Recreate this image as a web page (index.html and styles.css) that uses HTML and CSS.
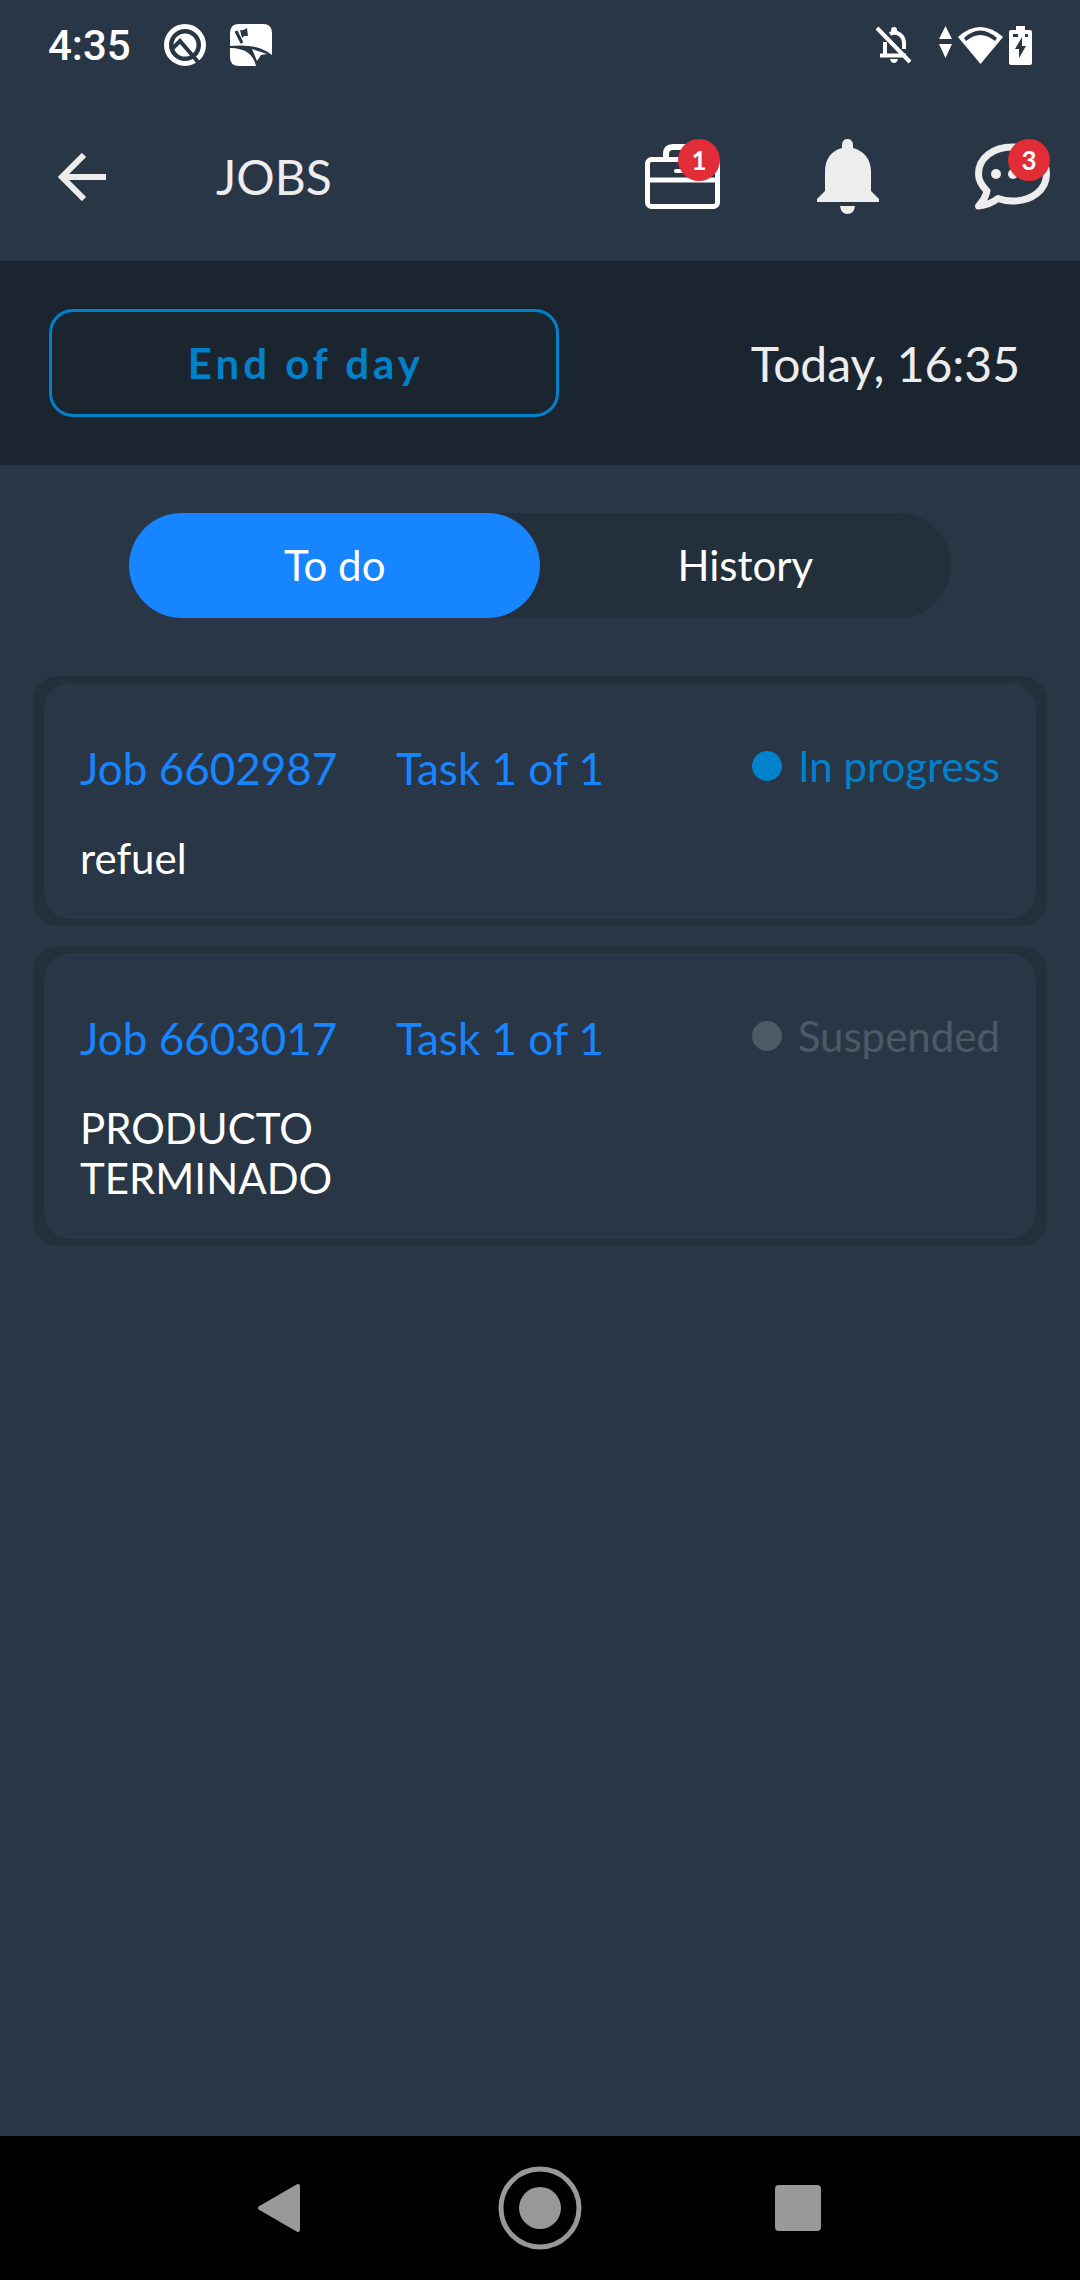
FILE: index.html
```html
<!DOCTYPE html>
<html lang="en">
<head>
    <meta charset="UTF-8">
    <meta name="viewport" content="width=device-width, initial-scale=1.0">
    <title>Jobs</title>
    <link rel="stylesheet" href="styles.css">
</head>
<body>

<div class="status-bar">
    <span class="clock">4:35</span>
    <svg width="42" height="42" viewBox="0 0 42 42">
        <circle cx="21" cy="21" r="18.5" fill="none" stroke="#fff" stroke-width="5"/>
        <circle cx="21" cy="21" r="11.5" fill="#fff"/>
        <path d="M8 25 L16 17 L34 38" fill="none" stroke="#293645" stroke-width="4"/>
    </svg>
    <svg width="42" height="42" viewBox="0 0 42 42">
        <path d="M9 0 H33 Q42 0 42 9 V31 Q28 19 0 22 V9 Q0 0 9 0 Z" fill="#fff"/>
        <path d="M0 24 Q22 24 26 42 H9 Q0 42 0 33 Z" fill="#fff"/>
        <path d="M22 25 L37 30 L31 31 L27 37 Z" fill="#fff"/>
        <path d="M6 7 L12 19" stroke="#293645" stroke-width="3"/>
        <path d="M10 6 Q13 7 17 4 L18 12 Q14 11 12 14 Z" fill="#293645"/>
    </svg>
    <div class="status-icons">
        <svg class="muted" width="37" height="38" viewBox="0 0 37 38">
            <path d="M5 29.5 H31 M10 29 V16 M15 8 C22 4 29 10 29 17 V23 M2 2 L35 36" fill="none" stroke="#fff" stroke-width="4"/>
            <circle cx="19" cy="4" r="3" fill="#fff"/>
            <path d="M15 33 H23 Q22 37 19 37 Q16 37 15 33 Z" fill="#fff"/>
        </svg>
        <svg width="13" height="38" viewBox="0 0 13 38">
            <path d="M0 13 L6.5 0 L13 13 Z M0 18 H13 L6.5 32 Z" fill="#fff"/>
        </svg>
        <svg width="45" height="38" viewBox="0 0 45 38">
            <path d="M0 11 Q22 -9 45 11 L22.5 38 Z" fill="#fff"/>
            <path d="M6 12 Q22 -3 39 12 L37 15 Q22 3 8 15 Z" fill="#293645"/>
        </svg>
        <svg width="23" height="39" viewBox="0 0 23 39">
            <path d="M7 0 H16 V4 H21 Q23 4 23 6 V37 Q23 39 21 39 H2 Q0 39 0 37 V6 Q0 4 2 4 H7 Z" fill="#fff"/>
            <path d="M13 11 L6 23 H10 V32 L17 20 H13 Z M4 8 H9 V11 H4 Z M16 8 H19 V11 H16 Z" fill="#293645"/>
        </svg>
    </div>
</div>

<header class="app-bar">
    <button class="icon-button" aria-label="Back">
        <svg width="48" height="48" viewBox="0 0 48 48">
            <path d="M26 2 L4 24 L26 46 M4 24 H48" fill="none" stroke="#ededed" stroke-width="6"/>
        </svg>
    </button>
    <h1>JOBS</h1>
    <nav class="actions">
        <button class="icon-button" aria-label="Jobs">
            <svg width="75" height="75" viewBox="0 0 75 75">
                <g fill="none" stroke="#fff" stroke-width="5">
                    <rect x="2.5" y="20.5" width="70" height="47" rx="4"/>
                    <path d="M2 41 H73"/>
                    <path d="M21 20 V15 Q21 8 28 8 H47 Q54 8 54 15 V20" stroke-width="6"/>
                    <path d="M31 32 H44" stroke-linecap="round" stroke-width="4"/>
                </g>
            </svg>
            <span class="badge">1</span>
        </button>
        <button class="icon-button" aria-label="Notifications">
            <svg width="75" height="75" viewBox="0 0 75 75">
                <path d="M32 9 V5 Q33 0 37.5 0 Q42 0 43 5 V9 C54 12 61 20 61 33 V52 L69 60 V63 H7 V60 L15 52 V33 C15 20 21 12 32 9 Z" fill="#ededed"/>
                <path d="M30 67 H45 Q44 75 37.5 75 Q31 75 30 67 Z" fill="#ededed"/>
            </svg>
        </button>
        <button class="icon-button" aria-label="Messages">
            <svg width="75" height="75" viewBox="0 0 75 75">
                <path d="M12 52 C6 46 3.5 40 3.5 35 C3.5 19 18 8 37.5 8 C57 8 71.5 19 71.5 35 C71.5 51 57 62 37.5 62 C32 62 27 61 23 59.5 C17 64 10 66.5 3.5 67 C8 62 11 57 12 52 Z" fill="none" stroke="#ededed" stroke-width="7" stroke-linejoin="round"/>
                <circle cx="21" cy="35" r="5" fill="#ededed"/>
                <circle cx="38" cy="35" r="5" fill="#ededed"/>
                <circle cx="54" cy="35" r="5" fill="#ededed"/>
            </svg>
            <span class="badge">3</span>
        </button>
    </nav>
</header>

<section class="day-bar">
    <button class="end-day">End of day</button>
    <span class="today">Today, 16:35</span>
</section>

<main>
    <div class="tabs" role="tablist">
        <button class="tab selected" role="tab" aria-selected="true">To do</button>
        <button class="tab" role="tab" aria-selected="false">History</button>
    </div>

    <article class="job-card">
        <div class="job-body">
            <h2 class="job-id">Job 6602987</h2>
            <span class="job-task">Task 1 of 1</span>
            <span class="job-status in-progress">In progress</span>
            <p class="job-name">refuel</p>
        </div>
    </article>
    <article class="job-card">
        <div class="job-body">
            <h2 class="job-id">Job 6603017</h2>
            <span class="job-task">Task 1 of 1</span>
            <span class="job-status suspended">Suspended</span>
            <p class="job-name">PRODUCTO TERMINADO</p>
        </div>
    </article>
</main>

<footer class="nav-bar">
    <button class="icon-button" aria-label="Back">
        <svg width="84" height="84" viewBox="0 0 84 84">
            <path d="M20 42 L58 20 V64 Z" fill="#999" stroke="#999" stroke-width="4" stroke-linejoin="round"/>
        </svg>
    </button>
    <button class="icon-button" aria-label="Home">
        <svg width="84" height="84" viewBox="0 0 84 84">
            <circle cx="42" cy="42" r="39" fill="none" stroke="#999" stroke-width="5"/>
            <circle cx="42" cy="42" r="21" fill="#999"/>
        </svg>
    </button>
    <button class="icon-button" aria-label="Recent apps">
        <svg width="84" height="84" viewBox="0 0 84 84">
            <rect x="19" y="19" width="46" height="46" rx="4" fill="#999"/>
        </svg>
    </button>
</footer>

</body>
</html>
```
FILE: styles.css
```css
* {
    box-sizing: border-box;
}
body {
    font-family: Lato, sans-serif;
    display: flex;
    flex-direction: column;
    min-height: 100vh;
    margin: 0;
    background-color: #293645;
    color: #fff;
}
button {
    font-family: inherit;
    color: inherit;
    background: none;
    border: none;
    padding: 0;
    cursor: pointer;
}
svg {
    display: block;
}
.status-bar {
    display: flex;
    align-items: center;
    gap: 24px;
    height: 90px;
    padding: 0 48px;
}
.clock {
    font-family: Roboto, sans-serif;
    font-size: 42px;
    font-weight: 500;
    margin-right: 9px;
}
.status-icons {
    display: flex;
    align-items: center;
    gap: 6px;
    margin-left: auto;
}
.muted {
    margin-right: 21px;
}
.app-bar {
    display: flex;
    align-items: center;
    height: 171px;
    padding: 2px 30px 0 58px;
}
.icon-button {
    position: relative;
}
h1 {
    margin: 0 0 0 110px;
    font-size: 48px;
    font-weight: 400;
    color: #ededed;
}
.actions {
    display: flex;
    gap: 90px;
    margin-left: auto;
}
.badge {
    position: absolute;
    top: 0;
    right: 0;
    width: 42px;
    height: 42px;
    border-radius: 50%;
    background-color: #e12d36;
    color: #fff;
    font-size: 26px;
    font-weight: 700;
    line-height: 42px;
}
.day-bar {
    display: flex;
    align-items: center;
    justify-content: space-between;
    padding: 48px 60px 48px 49px;
    background-color: #1b2530;
}
.end-day {
    width: 52.5%;
    height: 108px;
    padding-left: 4px;
    border: 3px solid #0081cc;
    border-radius: 24px;
    color: #0081cc;
    font-size: 42px;
    font-weight: 700;
    letter-spacing: 4px;
}
.today {
    font-size: 48px;
    color: #ededed;
}
main {
    display: flex;
    flex-direction: column;
    gap: 20px;
    flex: 1;
    padding: 48px 33px;
}
.tabs {
    display: flex;
    width: 81%;
    margin: 0 auto 38px;
    border-radius: 53px;
    background-color: #242f3c;
}
.tab {
    flex: 1;
    height: 105px;
    padding-bottom: 2px;
    border-radius: 53px;
    font-size: 42px;
}
.tab.selected {
    background-color: #1685ff;
}
.job-card {
    padding: 7px 11px;
    border-radius: 26px;
    background-color: #242f3c;
}
.job-body {
    display: grid;
    grid-template-columns: 280px 1fr auto;
    column-gap: 36px;
    row-gap: 40px;
    padding: 60px 36px;
    padding-bottom: 36px;
    border-radius: 26px;
    background-color: #293645;
}
.job-id,
.job-task {
    margin: 0;
    font-size: 44px;
    font-weight: 400;
    line-height: 50px;
    color: #1685ff;
}
.job-status {
    display: flex;
    align-items: center;
    align-self: start;
    gap: 16px;
    font-size: 42px;
    line-height: 46px;
}
.job-status::before {
    content: "";
    width: 30px;
    height: 30px;
    border-radius: 50%;
    background-color: currentColor;
}
.in-progress {
    color: #0081cc;
}
.suspended {
    color: #4d5a66;
}
.job-name {
    grid-column: 1;
    margin: 0;
    font-size: 42px;
    line-height: 50px;
}
.nav-bar {
    display: flex;
    justify-content: center;
    align-items: center;
    gap: 174px;
    height: 144px;
    background-color: #000;
}
```
